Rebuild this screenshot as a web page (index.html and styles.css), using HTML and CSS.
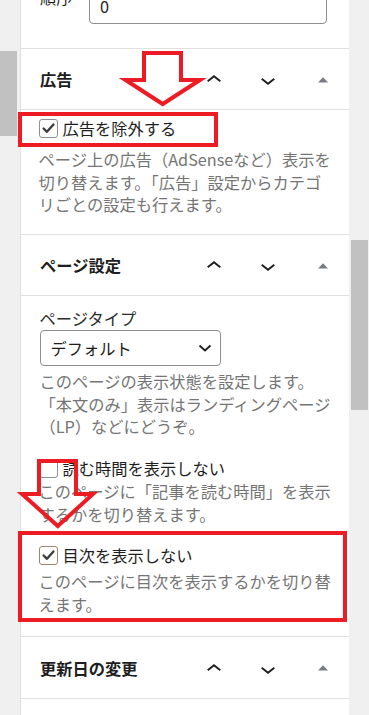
FILE: index.html
```html
<!DOCTYPE html>
<html lang="ja">
<head>
<meta charset="utf-8">
<title>Meta boxes</title>
<link rel="stylesheet" href="styles.css">
</head>
<body>
<div class="page">
  <div class="rail rail-left"><div class="thumb thumb-left"></div></div>
  <main class="panel">
    <section class="box box-top">
      <div class="field-row">
        <span class="field-label">順序</span>
        <div class="text-input">0</div>
      </div>
    </section>

    <section class="box">
      <div class="box-head">
        <h2 class="box-title">広告</h2>
        <div class="actions">
          <span class="btn"><svg class="chev" viewBox="0 0 24 24"><path d="M6.5 12.4L12 8l5.5 4.4-.9 1.2L12 10l-4.6 3.6-.9-1.2z"/></svg></span>
          <span class="btn"><svg class="chev" viewBox="0 0 24 24"><path d="M17.5 11.6L12 16l-5.5-4.4.9-1.2L12 14l4.6-3.6.9 1.2z"/></svg></span>
          <span class="btn btn-toggle"><svg class="tri" viewBox="0 0 10 6"><polygon points="0,5.6 5,0.2 10,5.6"/></svg></span>
        </div>
      </div>
      <div class="box-body body-ad">
        <div class="check-row">
          <span class="checkbox checked"><svg viewBox="0 0 19 19"><polyline points="4,9.5 7.8,13.2 15,5"/></svg></span>
          <span class="check-label">広告を除外する</span>
        </div>
        <p class="help help-ad">ページ上の広告（AdSenseなど）表示を<br>切り替えます。「広告」設定からカテゴ<br>リごとの設定も行えます。</p>
      </div>
    </section>

    <section class="box">
      <div class="box-head">
        <h2 class="box-title">ページ設定</h2>
        <div class="actions">
          <span class="btn"><svg class="chev" viewBox="0 0 24 24"><path d="M6.5 12.4L12 8l5.5 4.4-.9 1.2L12 10l-4.6 3.6-.9-1.2z"/></svg></span>
          <span class="btn"><svg class="chev" viewBox="0 0 24 24"><path d="M17.5 11.6L12 16l-5.5-4.4.9-1.2L12 14l4.6-3.6.9 1.2z"/></svg></span>
          <span class="btn btn-toggle"><svg class="tri" viewBox="0 0 10 6"><polygon points="0,5.6 5,0.2 10,5.6"/></svg></span>
        </div>
      </div>
      <div class="box-body body-page">
        <div class="field-title">ページタイプ</div>
        <div class="select">
          <span>デフォルト</span>
          <svg class="select-chev" viewBox="0 0 14 8"><polyline points="1.5,1.5 7,6.5 12.5,1.5"/></svg>
        </div>
        <p class="help help-type">このページの表示状態を設定します。<br>「本文のみ」表示はランディングページ<br>（LP）などにどうぞ。</p>
        <div class="check-row row-read">
          <span class="checkbox"></span>
          <span class="check-label">読む時間を表示しない</span>
        </div>
        <p class="help help-read">このページに「記事を読む時間」を表示<br>するかを切り替えます。</p>
        <div class="check-row row-toc">
          <span class="checkbox checked focus"><svg viewBox="0 0 19 19"><polyline points="4,9.5 7.8,13.2 15,5"/></svg></span>
          <span class="check-label">目次を表示しない</span>
        </div>
        <p class="help help-toc">このページに目次を表示するかを切り替<br>えます。</p>
      </div>
    </section>

    <section class="box">
      <div class="box-head">
        <h2 class="box-title">更新日の変更</h2>
        <div class="actions">
          <span class="btn"><svg class="chev" viewBox="0 0 24 24"><path d="M6.5 12.4L12 8l5.5 4.4-.9 1.2L12 10l-4.6 3.6-.9-1.2z"/></svg></span>
          <span class="btn"><svg class="chev" viewBox="0 0 24 24"><path d="M17.5 11.6L12 16l-5.5-4.4.9-1.2L12 14l4.6-3.6.9 1.2z"/></svg></span>
          <span class="btn btn-toggle"><svg class="tri" viewBox="0 0 10 6"><polygon points="0,5.6 5,0.2 10,5.6"/></svg></span>
        </div>
      </div>
    </section>
  </main>
  <div class="rail rail-right"><div class="thumb thumb-right"></div></div>

  <svg class="annotations" viewBox="0 0 369 715" width="369" height="715">
    <rect x="20" y="114" width="196" height="31"/>
    <rect x="20" y="533" width="325" height="87"/>
    <polygon points="144,53 181,53 181,80 200,80 162.7,104 125.5,80 144,80"/>
    <polygon points="39,461 76,461 76,494 93,494 57.8,526 22,494 39,494"/>
  </svg>
</div>
</body>
</html>
```

FILE: styles.css
```css
* { box-sizing: border-box; }

html, body {
  margin: 0;
  padding: 0;
  background: #f0f0f0;
}

body {
  font-family: "Noto Sans CJK JP", "Noto Sans", sans-serif;
  color: #1e1e1e;
  font-size: 16.25px;
  line-height: 22.5px;
}

.page {
  position: relative;
  display: flex;
  width: 369px;
  height: 715px;
  overflow: hidden;
}

.rail {
  width: 20px;
  flex: none;
}

.thumb { background: #c1c1c1; width: 17px; }
.thumb-left { margin-top: 51px; height: 85px; }
.thumb-right { margin-top: 240px; height: 170px; margin-left: 2px; }

.panel {
  width: 329px;
  flex: none;
  background: #fff;
  border-left: 1px solid #e0e0e0;
  overflow: hidden;
}

.box { border-bottom: 1px solid #e0e0e0; }

.box-top {
  margin-top: -12px;
  padding: 0 21px 24px 19px;
}

.field-row { display: flex; align-items: flex-start; }
.field-label { width: 49px; flex: none; color: #1e1e1e; margin-top: -2px; }

.text-input {
  width: 238px;
  height: 36px;
  border: 1px solid #8c8f94;
  border-radius: 4px;
  padding: 0 10px;
  display: flex;
  align-items: center;
}

.box-head {
  height: 61px;
  display: flex;
  align-items: center;
  border-bottom: 1px solid #e0e0e0;
}

.box:last-child .box-head { border-bottom: none; }

.box-title {
  flex: 1;
  margin: 0;
  padding-left: 19px;
  font-size: 16.25px;
  font-weight: 700;
  color: #1e1e1e;
}

.actions { display: flex; align-items: center; }

.btn {
  width: 54px;
  height: 40px;
  display: flex;
  align-items: center;
  justify-content: center;
}

.btn-toggle { width: 52px; margin-left: 2px; }

.chev { width: 30px; height: 30px; fill: #1e1e1e; margin-top: 2px; }
.tri { width: 10px; height: 6px; fill: #787c82; margin-top: 1px; }

.box-body { padding-left: 17.5px; padding-right: 10px; }

.body-ad { padding-top: 7px; padding-bottom: 18.75px; }

.check-row {
  display: flex;
  align-items: center;
  height: 22.5px;
}

.checkbox {
  width: 19px;
  height: 19px;
  flex: none;
  border: 1px solid #8c8f94;
  border-radius: 3px;
  margin-right: 5px;
  background: #fff;
}

.checkbox svg { display: block; width: 17px; height: 17px; }
.checkbox polyline {
  fill: none;
  stroke: #3c3c3c;
  stroke-width: 2.6;
  stroke-linecap: round;
  stroke-linejoin: round;
}

.checkbox.focus { border-color: #9b8573; border-width: 1.5px; }

.check-label { white-space: nowrap; color: #1e1e1e; }

.help {
  margin: 0;
  color: #757575;
  white-space: nowrap;
}

.help-ad { margin-top: 8.5px; }

.body-page { padding-top: 10.75px; padding-bottom: 21.25px; }

.field-title { color: #2c2c2c; padding-left: 1px; }

.select {
  margin-top: 0.75px;
  width: 181px;
  height: 36px;
  border: 1px solid #8c8f94;
  border-radius: 4px;
  padding: 0 8px 0 10px;
  display: flex;
  align-items: center;
  justify-content: space-between;
  margin-left: 1px;
}

.select-chev { width: 14px; height: 8px; }
.select-chev polyline { fill: none; stroke: #1e1e1e; stroke-width: 1.8; }

.help-type { margin-top: 3.75px; padding-left: 1px; }
.row-read { margin-top: 19.5px; }
.help-read { margin-top: 0.5px; }
.row-toc { margin-top: 19px; }
.help-toc { margin-top: 3.5px; }

.annotations {
  position: absolute;
  left: 0;
  top: 0;
  pointer-events: none;
}

.annotations rect,
.annotations polygon {
  fill: none;
  stroke: #ed1c24;
  stroke-width: 4;
  stroke-linejoin: miter;
}
```
